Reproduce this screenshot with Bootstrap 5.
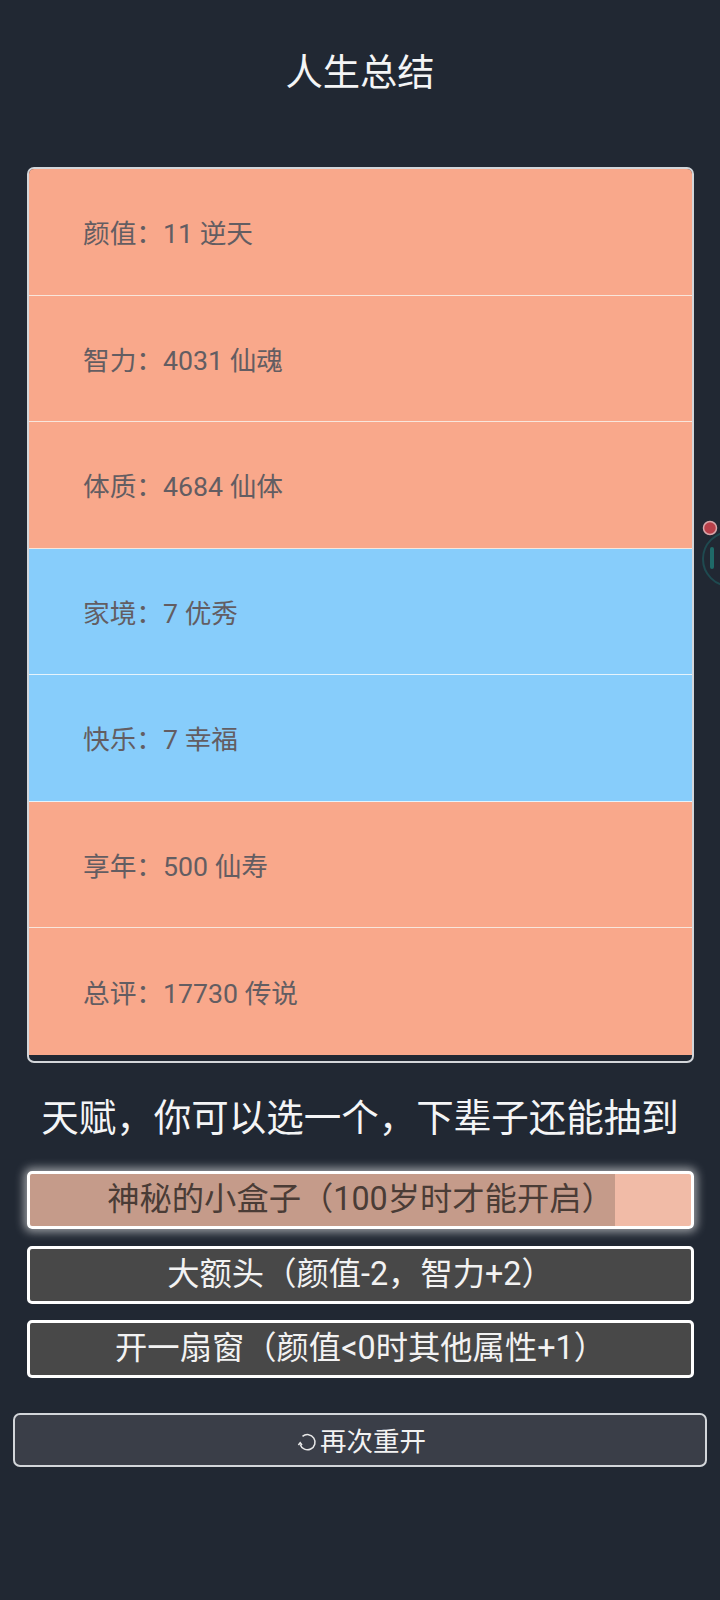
<!DOCTYPE html>
<html lang="zh-CN">
<head>
    <meta charset="UTF-8">
    <title>人生总结</title>
    <link href="https://cdn.jsdelivr.net/npm/bootstrap@5.3.0/dist/css/bootstrap.min.css" rel="stylesheet">
    <style>
        body {
            background: #212833;
            font-family: Roboto, "Noto Sans CJK SC", sans-serif;
            color: #f4f5f6;
            overflow: hidden;
        }
        .page-wrap { height: 1600px; padding: 0 13px; position: relative; }
        .page-title { font-size: 37.3px; line-height: 48px; padding-top: 49px; margin: 0 0 70px; font-weight: 400; text-align: center; }
        .summary-box {
            margin: 0 13px 0 14px;
            height: 896px;
            border: 2px solid #d3d6da;
            border-radius: 7px;
            overflow: hidden;
        }
        .summary-row {
            height: 126.55px;
            padding: 5px 0 0 54px;
            display: flex;
            align-items: center;
            font-size: 26.7px;
            color: #635d62;
            border-bottom: 1px solid #f8e6dc;
        }
        .summary-row:last-child { border-bottom: 0; }
        .tone-peach { background: #f9a88b; }
        .tone-blue { background: #87cdfb; border-bottom-color: #e6f3fb; }
        .talent-title { font-size: 37.5px; line-height: 48px; margin: 31px 0 29px; font-weight: 400; text-align: center; }
        .talent-list { margin: 0 13px 0 14px; gap: 16.5px; }
        .talent-btn {
            height: 58px;
            border: 3px solid #fff;
            border-radius: 5px;
            background: #484848;
            color: #f2f2f2;
            font-size: 32.3px;
            line-height: 50px;
            text-align: center;
            white-space: nowrap;
        }
        .talent-btn.picked {
            background: linear-gradient(90deg, #c59b8a 0, #c59b8a 88.5%, #f1bba7 88.5%);
            color: #4a3c36;
            box-shadow: 0 0 10px 3px rgba(255, 255, 255, .55);
        }
        .again-btn {
            display: flex;
            align-items: center;
            justify-content: center;
            height: 54px;
            margin-top: 35px;
            background: #3a3e48;
            border: 2px solid #d3d6da;
            border-radius: 7px;
            color: #f2f2f2;
            font-size: 26.5px;
            padding: 4px 0 0 3px;
        }
        .again-btn:hover { background: #3a3e48; color: #f2f2f2; border-color: #d3d6da; }
        .again-icon { margin-right: 3px; }
        .float-ball { position: absolute; left: 700px; top: 518px; width: 24px; height: 74px; }
    </style>
</head>
<body>
    <div class="page-wrap">
        <h1 class="page-title">人生总结</h1>

        <div class="summary-box">
            <div class="summary-row tone-peach">颜值：11 逆天</div>
            <div class="summary-row tone-peach">智力：4031 仙魂</div>
            <div class="summary-row tone-peach">体质：4684 仙体</div>
            <div class="summary-row tone-blue">家境：7 优秀</div>
            <div class="summary-row tone-blue">快乐：7 幸福</div>
            <div class="summary-row tone-peach">享年：500 仙寿</div>
            <div class="summary-row tone-peach">总评：17730 传说</div>
        </div>

        <h2 class="talent-title">天赋，你可以选一个，下辈子还能抽到</h2>

        <div class="talent-list d-flex flex-column">
            <div class="talent-btn picked">神秘的小盒子（100岁时才能开启）</div>
            <div class="talent-btn">大额头（颜值-2，智力+2）</div>
            <div class="talent-btn">开一扇窗（颜值&lt;0时其他属性+1）</div>
        </div>

        <button type="button" class="btn again-btn w-100">
            <svg class="again-icon" width="20" height="20" viewBox="0 0 20 20" fill="none" stroke="#e8e8e8" stroke-width="1.5">
                <path d="M5.5 4.4A7.6 7.6 0 1 1 3.2 12.5"/>
                <path d="M1.4 13l1.8-2.2 1.8 2.2"/>
            </svg>
            <span>再次重开</span>
        </button>

        <svg class="float-ball" viewBox="0 0 24 74" fill="none">
            <circle cx="30" cy="41" r="27" stroke="#1f4a50" stroke-width="2"/>
            <rect x="10" y="29" width="4" height="22" rx="2" fill="#1f6a68"/>
            <circle cx="10" cy="10" r="6.5" fill="#b8404a" stroke="#d9a6aa" stroke-width="1.5"/>
        </svg>
    </div>
    <script src="https://cdn.jsdelivr.net/npm/bootstrap@5.3.0/dist/js/bootstrap.bundle.min.js"></script>
</body>
</html>
